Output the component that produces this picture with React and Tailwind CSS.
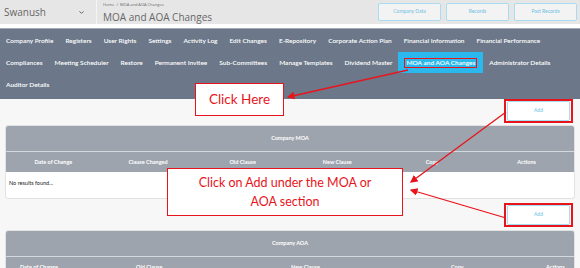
import { ChevronDown } from 'lucide-react';

const navRows = [
  ['Company Profile', 'Registers', 'User Rights', 'Settings', 'Activity Log', 'Edit Changes', 'E-Repository', 'Corporate Action Plan', 'Financial Information', 'Financial Performance'],
  ['Compliances', 'Meeting Scheduler', 'Restore', 'Permanent Invitee', 'Sub-Committees', 'Manage Templates', 'Dividend Master', 'MOA and AOA Changes', 'Administrator Details'],
  ['Auditor Details'],
];

const moaCols = ['Date of Change', 'Clause Changed', 'Old Clause', 'New Clause', 'Copy', 'Actions'];

function TopButton({ label }) {
  return (
    <button className="w-[63px] h-[18px] bg-[#f3f3f3] border border-[#a8dcf0] rounded-[2px] text-[5px] text-[#6cc0e2]">
      {label}
    </button>
  );
}

function AddButton() {
  return (
    <div className="flex border-2 border-[#e8141c] px-[1px]">
      <button className="block w-[63px] h-[20px] bg-white border border-[#a8dcf0] rounded-[2px] text-[5px] text-[#6cc0e2]">
        Add
      </button>
    </div>
  );
}

export default function App() {
  return (
    <div
      className="relative w-[580px] h-[268px] overflow-hidden bg-[#f7f7f7]"
      style={{ fontFamily: 'Lato, "Open Sans", sans-serif' }}
    >
      {/* header */}
      <div className="flex h-[24px] bg-[#e6e6e6]">
        <div className="flex items-center justify-between w-[96px] pl-[4px] pr-[11px] text-[10px] text-[#666]">
          <span style={{ fontFamily: '"Open Sans", sans-serif' }}>Swanush</span>
          <ChevronDown className="w-[7px] h-[7px] text-[#555]" strokeWidth={3} />
        </div>
        <div className="w-[1px] bg-[#f4f4f4]" />
        <div className="flex flex-col pl-[6px] pt-[2px]" style={{ fontFamily: '"Open Sans", sans-serif' }}>
          <span className="text-[4px] leading-[6px] text-[#666]">Home&nbsp;&nbsp;/&nbsp;&nbsp;MOA and AOA Changes</span>
          <span className="text-[10px] leading-[14px] mt-[2px] text-[#666]">MOA and AOA Changes</span>
        </div>
        <div className="ml-auto flex gap-[5px] pt-[3px] pr-[3px]">
          <TopButton label="Company Data" />
          <TopButton label="Records" />
          <TopButton label="Past Records" />
        </div>
      </div>
      <div className="h-[4px] bg-white" />

      {/* nav */}
      <div className="bg-[#6c7889] border-t border-[#a4acb6] h-[71px]">
        {navRows.map((row, i) => (
          <div key={i} className="flex h-[22px] pt-[1px]">
            {row.map((item) => {
              const active = item === 'MOA and AOA Changes';
              return (
                <div
                  key={item}
                  className={`flex items-center px-[6px] text-[6.5px] font-semibold text-white whitespace-nowrap ${active ? 'bg-[#2bb8ec]' : ''}`}
                >
                  <span className={active ? 'border border-[#e8141c] px-[1px] leading-[8px]' : ''}>{item}</span>
                </div>
              );
            })}
          </div>
        ))}
      </div>

      {/* content */}
      <div className="px-[5px]">
        <div className="flex justify-end pr-[2px]">
          <AddButton />
        </div>
        <div className="mt-[2px] rounded-[3px] overflow-hidden border border-[#e2e2e2] bg-white">
          <div className="h-[26px] bg-[#9ea4ad] flex items-center justify-center text-[5.5px] font-bold text-white border-b border-[#d4d7db]">
            Company MOA
          </div>
          <div className="grid grid-cols-6 h-[20px] bg-[#9ea4ad] text-[5.5px] font-bold text-white">
            {moaCols.map((c) => (
              <div key={c} className="flex items-center justify-center">{c}</div>
            ))}
          </div>
          <div className="h-[26px] pl-[3px] pt-[7px] text-[5.5px] text-[#222]">No results found...</div>
        </div>
        <div className="flex justify-end pr-[2px] mt-[4px]">
          <AddButton />
        </div>
        <div className="mt-[3px] rounded-[3px] overflow-hidden border border-[#e2e2e2] bg-white">
          <div className="h-[26px] bg-[#9ea4ad] flex items-center justify-center text-[5.5px] font-bold text-white border-b border-[#d4d7db]">
            Company AOA
          </div>
          <div className="flex h-[20px] bg-[#9ea4ad] text-[5.5px] font-bold text-white items-center">
            <span className="ml-[14px] w-[116px]">Date of Change</span>
            <span className="w-[155px]">Old Clause</span>
            <span className="w-[160px]">New Clause</span>
            <span className="w-[95px]">Copy</span>
            <span>Actions</span>
          </div>
        </div>
      </div>

      {/* annotations */}
      <div className="absolute left-[195px] top-[83px] w-[89px] h-[33px] bg-white border border-[#e8141c] flex items-center justify-center text-[13.5px] text-[#e8141c]">
        Click Here
      </div>
      <div className="absolute left-[167px] top-[168px] w-[236px] h-[48px] bg-white border border-[#e8141c] flex flex-col items-center justify-center text-[12.5px] leading-[19px] text-[#e8141c]">
        <span>Click on Add under the MOA or</span>
        <span>AOA section</span>
      </div>

      <svg className="absolute inset-0 pointer-events-none" width="580" height="268">
        <defs>
          <marker id="ah" markerWidth="6" markerHeight="6" refX="5" refY="3" orient="auto">
            <path d="M0,0 L6,3 L0,6 Z" fill="#e8141c" />
          </marker>
        </defs>
        <line x1="408" y1="70" x2="288" y2="97" stroke="#e8141c" strokeWidth="1.3" markerEnd="url(#ah)" />
        <line x1="506" y1="112" x2="411" y2="182" stroke="#e8141c" strokeWidth="1.3" markerEnd="url(#ah)" />
        <line x1="506" y1="218" x2="411" y2="190" stroke="#e8141c" strokeWidth="1.3" markerEnd="url(#ah)" />
      </svg>
    </div>
  );
}
